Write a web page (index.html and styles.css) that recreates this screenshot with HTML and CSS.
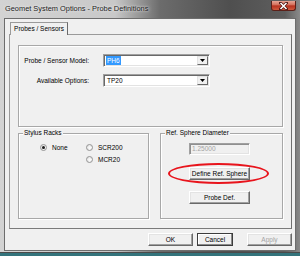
FILE: index.html
```html
<!DOCTYPE html>
<html lang="en">
<head>
    <meta charset="UTF-8">
    <meta name="viewport" content="width=device-width, initial-scale=1.0">
    <title>Geomet System Options - Probe Definitions</title>
    <link rel="stylesheet" href="styles.css">
</head>
<body>
    <div class="window">
        <div class="titlebar">
            <span class="title">Geomet System Options - Probe Definitions</span>
            <span class="close">
                <svg width="9" height="8" viewBox="0 0 9 8">
                    <path d="M1.5 1 L7.5 7 M7.5 1 L1.5 7" stroke="#4a1410" stroke-width="3" stroke-linecap="square"/>
                    <path d="M1.5 1 L7.5 7 M7.5 1 L1.5 7" stroke="#fff" stroke-width="1.6"/>
                </svg>
            </span>
        </div>

        <div class="client">
            <div class="tabs">
                <span class="tab">Probes / Sensors</span>
            </div>

            <div class="panel">
                <div class="group probe">
                    <label class="lbl">Probe / Sensor Model:</label>
                    <div class="combo">
                        <span class="value selected">PH6</span>
                        <span class="drop"><svg width="5" height="3" viewBox="0 0 5 3"><path d="M0 0 H5 L2.5 3 Z" fill="#000"/></svg></span>
                    </div>
                    <label class="lbl">Available Options:</label>
                    <div class="combo">
                        <span class="value">TP20</span>
                        <span class="drop"><svg width="5" height="3" viewBox="0 0 5 3"><path d="M0 0 H5 L2.5 3 Z" fill="#000"/></svg></span>
                    </div>
                </div>

                <div class="row">
                    <div class="group stylus">
                        <span class="legend">Stylus Racks</span>
                        <div class="radios">
                            <span class="radio checked"><i class="dot"></i>None</span>
                            <span class="radio"><i class="dot"></i>SCR200</span>
                            <span></span>
                            <span class="radio"><i class="dot"></i>MCR20</span>
                        </div>
                    </div>

                    <div class="group sphere">
                        <span class="legend">Ref. Sphere Diameter</span>
                        <span class="textbox disabled">1.25000</span>
                        <button class="btn define">Define Ref. Sphere</button>
                        <button class="btn probedef">Probe Def.</button>
                        <span class="ring"></span>
                    </div>
                </div>
            </div>

            <div class="actions">
                <button class="btn ok">OK</button>
                <button class="btn cancel">Cancel</button>
                <button class="btn apply" disabled>Apply</button>
            </div>
        </div>
    </div>
</body>
</html>
```

FILE: styles.css
```css
html, body {
    margin: 0;
    padding: 0;
}
body {
    width: 300px;
    height: 256px;
    overflow: hidden;
    background-color: #33737b;
    font-family: 'Liberation Sans', Arial, sans-serif;
    font-size: 6.5px;
    color: #000;
}
.window {
    width: 300px;
    height: 253px;
    box-sizing: border-box;
    padding: 0 4px 1px 4px;
    display: flex;
    flex-direction: column;
    background: linear-gradient(90deg, #d3d3d3 0, #c8c8c8 115px, #6c6c6c 160px, #4f4f4f 230px, #5e5e5e 285px, #8a8a8a 300px);
    border-bottom: 1px solid #4a4a4a;
}
.titlebar {
    height: 18px;
    display: flex;
    align-items: flex-start;
    margin: 0 -4px;
}
.title {
    margin: 4px 0 0 5px;
    font-size: 7.4px;
    line-height: 9px;
    color: #1b1b1b;
    text-shadow: 0 0 4px rgba(240, 240, 240, 0.9), 0 0 2px rgba(240, 240, 240, 0.9);
}
.close {
    margin: 1px 4px 0 auto;
    width: 25px;
    height: 10px;
    box-sizing: border-box;
    border: 1px solid #5b2019;
    border-top: none;
    border-radius: 0 0 3px 3px;
    background: linear-gradient(#e6a596 0, #d6735f 40%, #b8321f 55%, #cf5a3e 100%);
    display: flex;
    justify-content: center;
    align-items: center;
}
.client {
    flex: 1;
    border: 1px solid #6d6d6d;
    background-color: #f0f0f0;
    padding: 3px 0 0 4px;
    display: flex;
    flex-direction: column;
}
.tabs {
    height: 12px;
    display: flex;
    position: relative;
    z-index: 1;
}
.tab {
    margin-left: 1px;
    width: 58px;
    height: 13px;
    box-sizing: border-box;
    border: 1px solid #9a9a9a;
    border-bottom: none;
    border-right-color: #6a6a6a;
    background-color: #f0f0f0;
    line-height: 12px;
    text-align: center;
}
.panel {
    width: 283px;
    height: 195px;
    box-sizing: border-box;
    border: 1px solid #9a9a9a;
    border-right-color: #6f6f6f;
    border-bottom-color: #7a7a7a;
    padding: 10px 8px 9px 8px;
    display: flex;
    flex-direction: column;
    gap: 6px;
}
.group {
    position: relative;
    box-sizing: border-box;
    border: 1px solid #a8a8a8;
    box-shadow: inset 1px 1px 0 #fff, 1px 1px 0 #fff;
}
.legend {
    position: absolute;
    left: 4px;
    top: -5px;
    padding: 0 1px;
    line-height: 8px;
    background-color: #f0f0f0;
}
.probe {
    height: 82px;
    padding: 8px 0 0 4px;
    display: grid;
    grid-template-columns: 66px 107px;
    grid-auto-rows: 13px;
    column-gap: 14px;
    row-gap: 7px;
    align-content: start;
}
.lbl {
    text-align: right;
    line-height: 13px;
}
.combo {
    box-sizing: border-box;
    display: flex;
    align-items: center;
    background-color: #fff;
    border: 1px solid;
    border-color: #a0a0a0 #fff #fff #a0a0a0;
    box-shadow: inset 1px 1px 0 #696969, inset -1px -1px 0 #e3e3e3;
    padding: 1px;
}
.value {
    flex: 1;
    padding-left: 2px;
    line-height: 9px;
}
.value.selected {
    flex: none;
    margin-left: 1px;
    padding: 0 1px;
    background-color: #3399ff;
    color: #fff;
}
.combo .selected + .drop {
    margin-left: auto;
}
.drop {
    width: 11px;
    height: 9px;
    box-sizing: border-box;
    border: 1px solid;
    border-color: #e3e3e3 #696969 #696969 #e3e3e3;
    background-color: #f0f0f0;
    display: flex;
    justify-content: center;
    align-items: center;
}
.drop svg {
    display: block;
}
.row {
    display: flex;
    gap: 11px;
}
.stylus {
    width: 131px;
    height: 86px;
    padding: 7px 0 0 21px;
}
.radios {
    display: grid;
    grid-template-columns: 46px auto;
    grid-auto-rows: 12px;
}
.radio {
    display: flex;
    align-items: center;
    gap: 5px;
}
.dot {
    width: 7px;
    height: 7px;
    box-sizing: border-box;
    border-radius: 50%;
    border: 1px solid #949494;
    background: radial-gradient(circle at 60% 60%, #fff 0, #e6e6e6 70%);
    display: flex;
    justify-content: center;
    align-items: center;
}
.radio.checked .dot::after {
    content: "";
    width: 3px;
    height: 3px;
    border-radius: 50%;
    background-color: #1a1a1a;
}
.sphere {
    width: 123px;
    height: 86px;
    padding: 9px 0 0 28px;
    display: flex;
    flex-direction: column;
    align-items: flex-start;
}
.textbox {
    width: 61px;
    height: 12px;
    box-sizing: border-box;
    border: 1px solid;
    border-color: #a0a0a0 #fff #fff #a0a0a0;
    box-shadow: inset 1px 1px 0 #8f8f8f, inset -1px -1px 0 #e3e3e3;
    padding-left: 2px;
    line-height: 10px;
    background-color: #f0f0f0;
}
.disabled {
    color: #a3a3a3;
}
.btn {
    font-family: inherit;
    font-size: 6.5px;
    color: #000;
    height: 13px;
    padding: 0;
    box-sizing: border-box;
    background-color: #f0f0f0;
    border: 1px solid;
    border-color: #fff #696969 #696969 #fff;
    box-shadow: inset -1px -1px 0 #a0a0a0, inset 1px 1px 0 #e3e3e3;
    line-height: 10px;
}
.define {
    width: 61px;
    margin-top: 12px;
}
.probedef {
    width: 61px;
    margin-top: 11px;
}
.ring {
    position: absolute;
    left: 7px;
    top: 29px;
    width: 101px;
    height: 21px;
    box-sizing: border-box;
    border: 2px solid #e8141c;
    border-radius: 50%;
}
.actions {
    margin-top: 4px;
    padding-right: 3px;
    display: flex;
    justify-content: flex-end;
}
.ok {
    width: 45px;
    margin-right: 4px;
}
.cancel {
    width: 36px;
    margin-right: 14px;
    border-color: #3c3c3c;
    box-shadow: inset -1px -1px 0 #8a8a8a, inset 1px 1px 0 #fff;
}
.apply {
    width: 45px;
    color: #a3a3a3;
}
```
